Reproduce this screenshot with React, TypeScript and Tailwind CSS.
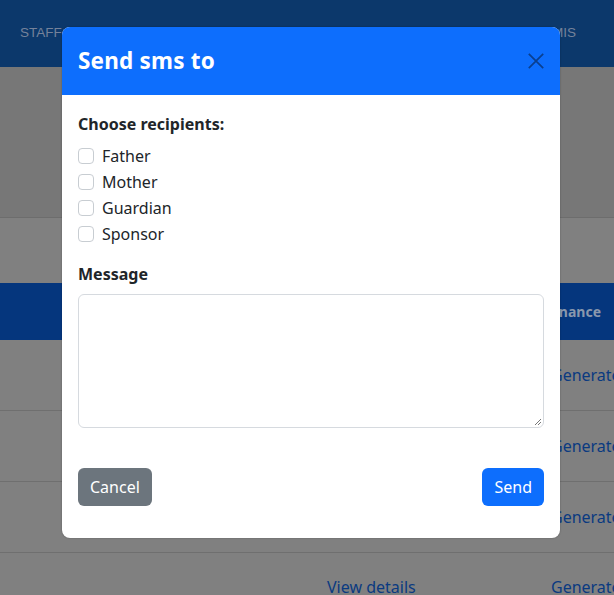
import React from "react";

const font = { fontFamily: '"Noto Sans", "Open Sans", sans-serif' };

function Row() {
  return (
    <div className="h-[71px] flex items-center border-b border-[#6f6f6f]">
      <div className="w-[551px] shrink-0" />
      <div className="shrink-0 text-[16px] text-[#0a3a80] whitespace-nowrap">Generate</div>
    </div>
  );
}

export default function App() {
  const recipients = ["Father", "Mother", "Guardian", "Sponsor"];
  return (
    <div className="relative w-[614px] h-[595px] overflow-hidden bg-[#808080]" style={font}>
      {/* background page */}
      <div className="h-[67px] bg-[#0c386b] flex items-start justify-between px-5 pt-[23px] text-[13.5px] text-[#75829a]" style={{ fontFamily: '"Liberation Sans", Arial, sans-serif' }}>
        <span>STAFF</span>
        <span className="pr-[18px]">MIS</span>
      </div>
      <div className="h-[151px] bg-[#777777] border-b border-[#6d6d6d]" />
      <div className="h-[65px]" />
      <div className="h-[57px] bg-[#05367d] flex items-center pl-[547px] text-[14px] font-bold text-[#8a98ad] whitespace-nowrap">
        Finance
      </div>
      <Row />
      <Row />
      <Row />
      <div className="h-[71px] flex items-start pt-[22px] leading-[24px]">
        <div className="w-[327px] shrink-0" />
        <div className="w-[224px] shrink-0 text-[16px] text-[#0a3a80] whitespace-nowrap">View details</div>
        <div className="shrink-0 text-[16px] text-[#0a3a80] whitespace-nowrap">Generate</div>
      </div>

      {/* modal */}
      <div className="absolute left-[62px] top-[27px] w-[498px] bg-white rounded-[8px] overflow-hidden shadow-[0_0_2px_rgba(0,0,0,0.3)]">
        <div className="h-[68px] bg-[#0d6efd] flex items-center justify-between pl-4 pr-[16px]">
          <h5 className="text-[22.5px] font-bold text-white leading-[30px] tracking-[0.2px]">Send sms to</h5>
          <svg width="16" height="16" viewBox="0 0 16 16">
            <path d="M0.8 0.8 L15.2 15.2 M15.2 0.8 L0.8 15.2" stroke="#0a3f8f" strokeWidth="1.7" fill="none" />
          </svg>
        </div>
        <div className="px-4 pt-[17px] pb-8">
          <div className="text-[16px] font-bold text-[#212529] leading-[24px]">Choose recipients:</div>
          <div className="mt-2 flex flex-col gap-[2px]">
            {recipients.map((r) => (
              <label key={r} className="flex items-center gap-2 h-[24px] text-[16px] text-[#212529]">
                <span className="w-4 h-4 rounded-[4px] border border-[#c8cdd2] bg-white" />
                <span>{r}</span>
              </label>
            ))}
          </div>
          <div className="mt-4 text-[16px] font-bold text-[#212529] leading-[24px]">Message</div>
          <div className="mt-2 relative h-[134px] rounded-[6px] border border-[#d6dadf] bg-white">
            <svg className="absolute right-[1px] bottom-[1px]" width="8" height="8" viewBox="0 0 8 8">
              <path d="M7 1 L1 7 M7 4 L4 7" stroke="#777" strokeWidth="1" />
            </svg>
          </div>
          <div className="mt-10 flex justify-between">
            <button className="h-[38px] px-3 rounded-[6px] bg-[#6c757d] text-white text-[16px]">Cancel</button>
            <button className="h-[38px] px-3 rounded-[6px] bg-[#0d6efd] text-white text-[16px]">Send</button>
          </div>
        </div>
      </div>
    </div>
  );
}
